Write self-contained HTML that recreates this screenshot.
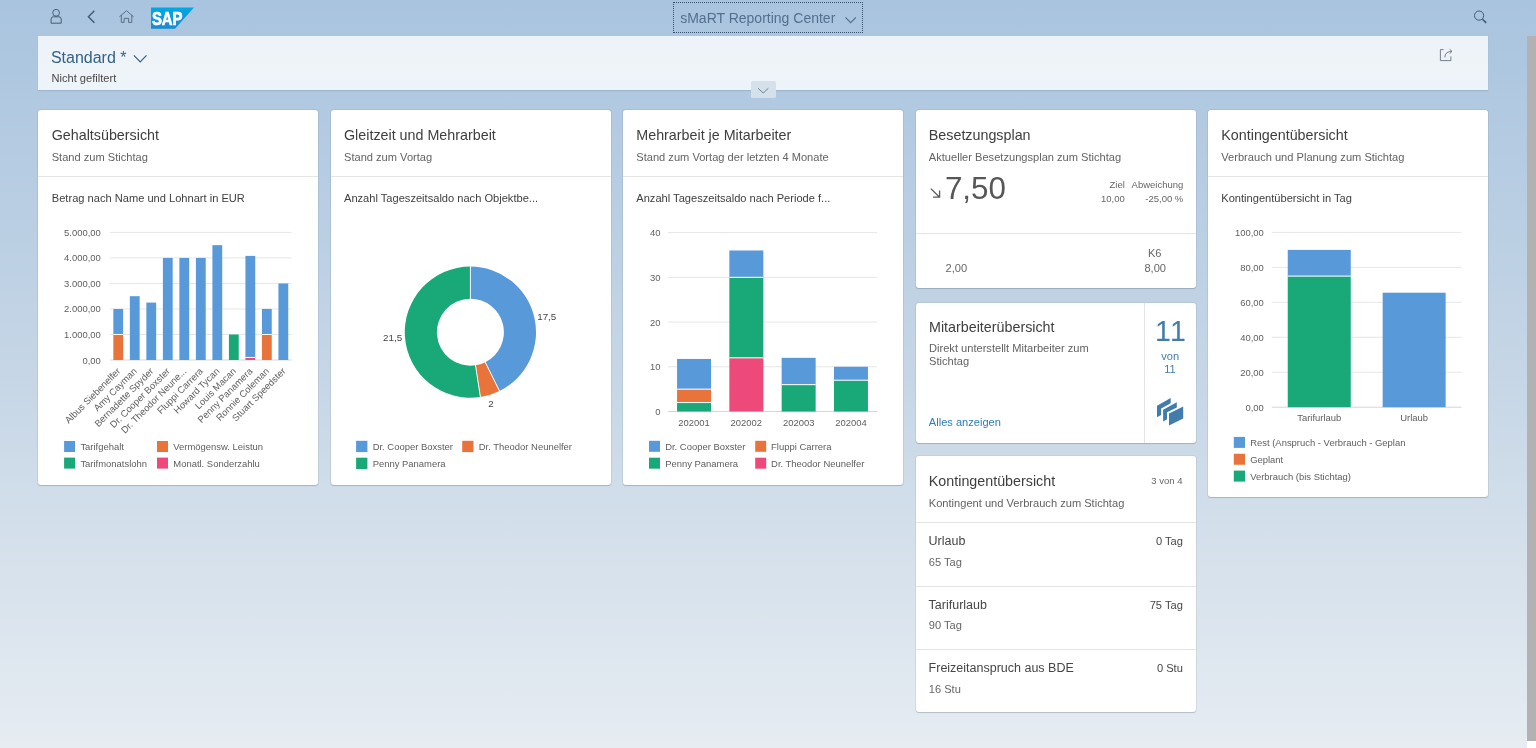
<!DOCTYPE html>
<html><head><meta charset="utf-8"><title>sMaRT Reporting Center</title>
<style>
html,body{margin:0;padding:0;width:1536px;height:748px;overflow:hidden;}
body{position:relative;font-family:"Liberation Sans", sans-serif;background:linear-gradient(180deg,#a9c4df 0%,#c6d6e6 50%,#e6ecf2 100%);}
.t{position:absolute;white-space:nowrap;}
.card{position:absolute;background:#fff;border-radius:3px;box-shadow:0 0 0 1px rgba(40,70,100,0.07),0 1px 1px rgba(0,0,0,0.15);}
.div{position:absolute;height:1px;background:#e5e5e5;}
.vdiv{position:absolute;width:1px;background:#e5e5e5;}
.hdr{position:absolute;left:38px;top:36px;width:1450px;height:54px;background:linear-gradient(180deg,rgba(255,255,255,0.78) 0%,rgba(255,255,255,0.80) 70%,rgba(245,252,255,0.86) 100%);box-shadow:0 1px 1px rgba(60,80,100,0.14);}
.focus{position:absolute;left:673px;top:2px;width:190px;height:31px;box-sizing:border-box;border:1px dotted #34506b;}
.coll{position:absolute;left:750.8px;top:81px;width:25px;height:16.6px;background:#d4e0ea;border-radius:1.5px;}
.sb{position:absolute;left:1526.5px;top:36px;width:9.5px;height:705px;background:#b2b2b2;}
.sbw{position:absolute;left:1526.5px;top:741px;width:9.5px;height:7px;background:#fff;}
svg.ov{position:absolute;left:0;top:0;will-change:transform;}
.txt{position:absolute;left:0;top:0;width:1536px;height:748px;will-change:transform;}
svg text{font-family:"Liberation Sans", sans-serif;}
</style></head><body>
<div class="hdr"></div>
<div class="coll"></div>
<div class="sb"></div><div class="focus"></div><div class="sbw"></div>
<div class="card" style="left:38px;top:110px;width:280px;height:375px"></div><div class="card" style="left:330.5px;top:110px;width:280.0px;height:375px"></div><div class="card" style="left:623px;top:110px;width:280px;height:375px"></div><div class="card" style="left:915.5px;top:110px;width:280.5px;height:178px"></div><div class="card" style="left:915.5px;top:302.7px;width:280.5px;height:140.10000000000002px"></div><div class="card" style="left:915.5px;top:456px;width:280.5px;height:256.20000000000005px"></div><div class="card" style="left:1208px;top:110px;width:280px;height:387px"></div>
<svg class="ov" width="1536" height="748" viewBox="0 0 1536 748"><circle cx="56.1" cy="12.8" r="3.4" fill="none" stroke="#41596f" stroke-width="0.95"/><path d="M51.1,23.2 L51.1,19.1 Q51.1,16.8 53.4,16.8 L58.9,16.8 Q61.2,16.8 61.2,19.1 L61.2,23.2 Z" fill="none" stroke="#41596f" stroke-width="0.95"/><path d="M94.4,10.8 L88.4,16.8 L94.4,22.7" fill="none" stroke="#3f5a73" stroke-width="1.4"/><path d="M119.4,16.8 L126.5,10.7 L133.6,16.8 M121.3,15.2 L121.3,22.4 L124.1,22.4 L124.1,18.4 L128.6,18.4 L128.6,22.4 L131.8,22.4 L131.8,15.2" fill="none" stroke="#5b6f86" stroke-width="1"/><defs><linearGradient id="sapg" x1="0" y1="0" x2="0" y2="1"><stop offset="0" stop-color="#00a8e6"/><stop offset="1" stop-color="#1b8ad0"/></linearGradient></defs><path d="M151,7.4 L194,7.4 L175,28.8 L151,28.8 Z" fill="url(#sapg)"/><text x="151.9" y="24.8" font-size="18.6" font-weight="bold" fill="#fff" stroke="#fff" stroke-width="0.7" textLength="30.6" lengthAdjust="spacingAndGlyphs">SAP</text><path d="M845.5,17.4 L850.7,22.6 L855.9,17.4" fill="none" stroke="#4f6d8a" stroke-width="1.1"/><circle cx="1479.1" cy="15.6" r="4.6" fill="none" stroke="#3f5a73" stroke-width="1"/><path d="M1482.5,19.2 L1486.2,22.9" stroke="#3f5a73" stroke-width="1.6"/><path d="M133.9,55.4 L140.2,61.9 L146.5,55.4" fill="none" stroke="#346187" stroke-width="1.2"/><path d="M1443.6,49.6 L1440.4,49.6 L1440.4,60.6 L1450.9,60.6 L1450.9,56.4" fill="none" stroke="#65737f" stroke-width="0.9"/><path d="M1444.8,57.4 Q1445,51.6 1451.6,51.4" fill="none" stroke="#65737f" stroke-width="0.9"/><path d="M1449.6,49.2 L1452,51.4 L1449.6,53.6" fill="none" stroke="#65737f" stroke-width="0.9"/><path d="M758.1,88.3 L763.2,93 L768.3,88.3" fill="none" stroke="#66798a" stroke-width="0.9"/></svg>
<svg class="ov" width="1536" height="748" viewBox="0 0 1536 748"><line x1="110.00" y1="360.00" x2="291.60" y2="360.00" stroke="#d6d6d6" stroke-width="1"/><text x="100.80" y="363.50" font-size="9.45" fill="#5e5e5e" text-anchor="end" >0,00</text><line x1="110.00" y1="334.48" x2="291.60" y2="334.48" stroke="#e6e6e6" stroke-width="1"/><text x="100.80" y="337.98" font-size="9.45" fill="#5e5e5e" text-anchor="end" >1.000,00</text><line x1="110.00" y1="308.96" x2="291.60" y2="308.96" stroke="#e6e6e6" stroke-width="1"/><text x="100.80" y="312.46" font-size="9.45" fill="#5e5e5e" text-anchor="end" >2.000,00</text><line x1="110.00" y1="283.44" x2="291.60" y2="283.44" stroke="#e6e6e6" stroke-width="1"/><text x="100.80" y="286.94" font-size="9.45" fill="#5e5e5e" text-anchor="end" >3.000,00</text><line x1="110.00" y1="257.92" x2="291.60" y2="257.92" stroke="#e6e6e6" stroke-width="1"/><text x="100.80" y="261.42" font-size="9.45" fill="#5e5e5e" text-anchor="end" >4.000,00</text><line x1="110.00" y1="232.40" x2="291.60" y2="232.40" stroke="#e6e6e6" stroke-width="1"/><text x="100.80" y="235.90" font-size="9.45" fill="#5e5e5e" text-anchor="end" >5.000,00</text><rect x="113.35" y="334.48" width="9.80" height="25.52" fill="#e8743b" /><rect x="113.35" y="308.96" width="9.80" height="25.52" fill="#5899da" /><line x1="113.35" y1="334.48" x2="123.15" y2="334.48" stroke="#fff" stroke-width="1"/><text x="121.05" y="371.80" font-size="9.45" fill="#5e5e5e" text-anchor="end" transform="rotate(-45 121.05 371.8)">Albus Siebenelfer</text><rect x="129.86" y="296.20" width="9.80" height="63.80" fill="#5899da" /><text x="137.56" y="371.80" font-size="9.45" fill="#5e5e5e" text-anchor="end" transform="rotate(-45 137.56 371.8)">Amy Cayman</text><rect x="146.37" y="302.58" width="9.80" height="57.42" fill="#5899da" /><text x="154.07" y="371.80" font-size="9.45" fill="#5e5e5e" text-anchor="end" transform="rotate(-45 154.07 371.8)">Bernadette Spyder</text><rect x="162.88" y="257.92" width="9.80" height="102.08" fill="#5899da" /><text x="170.58" y="371.80" font-size="9.45" fill="#5e5e5e" text-anchor="end" transform="rotate(-45 170.58 371.8)">Dr. Cooper Boxster</text><rect x="179.39" y="257.92" width="9.80" height="102.08" fill="#5899da" /><text x="187.09" y="371.80" font-size="9.45" fill="#5e5e5e" text-anchor="end" transform="rotate(-45 187.09 371.8)">Dr. Theodor Neune...</text><rect x="195.90" y="257.92" width="9.80" height="102.08" fill="#5899da" /><text x="203.60" y="371.80" font-size="9.45" fill="#5e5e5e" text-anchor="end" transform="rotate(-45 203.60 371.8)">Fluppi Carrera</text><rect x="212.41" y="245.16" width="9.80" height="114.84" fill="#5899da" /><text x="220.11" y="371.80" font-size="9.45" fill="#5e5e5e" text-anchor="end" transform="rotate(-45 220.11 371.8)">Howard Tycan</text><rect x="228.92" y="334.48" width="9.80" height="25.52" fill="#19a979" /><text x="236.62" y="371.80" font-size="9.45" fill="#5e5e5e" text-anchor="end" transform="rotate(-45 236.62 371.8)">Louis Macan</text><rect x="245.43" y="357.45" width="9.80" height="2.55" fill="#ed4a7b" /><rect x="245.43" y="255.88" width="9.80" height="101.57" fill="#5899da" /><line x1="245.43" y1="357.45" x2="255.23" y2="357.45" stroke="#fff" stroke-width="1"/><text x="253.13" y="371.80" font-size="9.45" fill="#5e5e5e" text-anchor="end" transform="rotate(-45 253.13 371.8)">Penny Panamera</text><rect x="261.94" y="334.48" width="9.80" height="25.52" fill="#e8743b" /><rect x="261.94" y="308.96" width="9.80" height="25.52" fill="#5899da" /><line x1="261.94" y1="334.48" x2="271.74" y2="334.48" stroke="#fff" stroke-width="1"/><text x="269.64" y="371.80" font-size="9.45" fill="#5e5e5e" text-anchor="end" transform="rotate(-45 269.64 371.8)">Ronnie Coleman</text><rect x="278.45" y="283.44" width="9.80" height="76.56" fill="#5899da" /><text x="286.15" y="371.80" font-size="9.45" fill="#5e5e5e" text-anchor="end" transform="rotate(-45 286.15 371.8)">Stuart Speedster</text><rect x="64.10" y="441.00" width="11.00" height="11.00" fill="#5899da" /><text x="80.40" y="449.90" font-size="9.45" fill="#5e5e5e" text-anchor="start" >Tarifgehalt</text><rect x="157.00" y="441.00" width="11.00" height="11.00" fill="#e8743b" /><text x="173.30" y="449.90" font-size="9.45" fill="#5e5e5e" text-anchor="start" >Vermögensw. Leistun</text><rect x="64.10" y="457.60" width="11.00" height="11.00" fill="#19a979" /><text x="80.40" y="466.50" font-size="9.45" fill="#5e5e5e" text-anchor="start" >Tarifmonatslohn</text><rect x="157.00" y="457.60" width="11.00" height="11.00" fill="#ed4a7b" /><text x="173.30" y="466.50" font-size="9.45" fill="#5e5e5e" text-anchor="start" >Monatl. Sonderzahlu</text><path d="M470.40,266.60 A65.6,65.6 0 0 1 499.51,390.99 L485.26,362.22 A33.5,33.5 0 0 0 470.40,298.70 Z" fill="#5899da"/><path d="M499.51,390.99 A65.6,65.6 0 0 1 480.41,397.03 L475.51,365.31 A33.5,33.5 0 0 0 485.26,362.22 Z" fill="#e8743b"/><path d="M480.41,397.03 A65.6,65.6 0 1 1 470.40,266.60 L470.40,298.70 A33.5,33.5 0 1 0 475.51,365.31 Z" fill="#19a979"/><line x1="470.40" y1="299.70" x2="470.40" y2="265.60" stroke="#fff" stroke-width="1"/><line x1="484.82" y1="361.33" x2="499.95" y2="391.88" stroke="#fff" stroke-width="1"/><line x1="475.36" y1="364.32" x2="480.57" y2="398.02" stroke="#fff" stroke-width="1"/><text x="537.20" y="320.00" font-size="9.8" fill="#444" text-anchor="start" >17,5</text><text x="402.10" y="341.20" font-size="9.8" fill="#444" text-anchor="end" >21,5</text><text x="491.00" y="407.40" font-size="9.8" fill="#444" text-anchor="middle" >2</text><rect x="356.10" y="440.80" width="11.30" height="11.30" fill="#5899da" /><text x="372.70" y="449.85" font-size="9.45" fill="#5e5e5e" text-anchor="start" >Dr. Cooper Boxster</text><rect x="462.20" y="440.80" width="11.30" height="11.30" fill="#e8743b" /><text x="478.80" y="449.85" font-size="9.45" fill="#5e5e5e" text-anchor="start" >Dr. Theodor Neunelfer</text><rect x="356.10" y="457.70" width="11.30" height="11.30" fill="#19a979" /><text x="372.70" y="466.75" font-size="9.45" fill="#5e5e5e" text-anchor="start" >Penny Panamera</text><line x1="667.90" y1="411.50" x2="877.10" y2="411.50" stroke="#d6d6d6" stroke-width="1"/><text x="660.50" y="415.00" font-size="9.45" fill="#5e5e5e" text-anchor="end" >0</text><line x1="667.90" y1="366.77" x2="877.10" y2="366.77" stroke="#e6e6e6" stroke-width="1"/><text x="660.50" y="370.27" font-size="9.45" fill="#5e5e5e" text-anchor="end" >10</text><line x1="667.90" y1="322.05" x2="877.10" y2="322.05" stroke="#e6e6e6" stroke-width="1"/><text x="660.50" y="325.55" font-size="9.45" fill="#5e5e5e" text-anchor="end" >20</text><line x1="667.90" y1="277.32" x2="877.10" y2="277.32" stroke="#e6e6e6" stroke-width="1"/><text x="660.50" y="280.82" font-size="9.45" fill="#5e5e5e" text-anchor="end" >30</text><line x1="667.90" y1="232.60" x2="877.10" y2="232.60" stroke="#e6e6e6" stroke-width="1"/><text x="660.50" y="236.10" font-size="9.45" fill="#5e5e5e" text-anchor="end" >40</text><rect x="677.05" y="402.56" width="34.00" height="8.94" fill="#19a979" /><rect x="677.05" y="389.14" width="34.00" height="13.42" fill="#e8743b" /><line x1="677.05" y1="402.56" x2="711.05" y2="402.56" stroke="#fff" stroke-width="1"/><rect x="677.05" y="358.95" width="34.00" height="30.19" fill="#5899da" /><line x1="677.05" y1="389.14" x2="711.05" y2="389.14" stroke="#fff" stroke-width="1"/><text x="694.05" y="426.00" font-size="9.45" fill="#5e5e5e" text-anchor="middle" >202001</text><rect x="729.35" y="357.83" width="34.00" height="53.67" fill="#ed4a7b" /><rect x="729.35" y="277.32" width="34.00" height="80.50" fill="#19a979" /><line x1="729.35" y1="357.83" x2="763.35" y2="357.83" stroke="#fff" stroke-width="1"/><rect x="729.35" y="250.49" width="34.00" height="26.84" fill="#5899da" /><line x1="729.35" y1="277.32" x2="763.35" y2="277.32" stroke="#fff" stroke-width="1"/><text x="746.35" y="426.00" font-size="9.45" fill="#5e5e5e" text-anchor="middle" >202002</text><rect x="781.65" y="384.67" width="34.00" height="26.83" fill="#19a979" /><rect x="781.65" y="357.83" width="34.00" height="26.84" fill="#5899da" /><line x1="781.65" y1="384.67" x2="815.65" y2="384.67" stroke="#fff" stroke-width="1"/><text x="798.65" y="426.00" font-size="9.45" fill="#5e5e5e" text-anchor="middle" >202003</text><rect x="833.95" y="380.19" width="34.00" height="31.31" fill="#19a979" /><rect x="833.95" y="366.77" width="34.00" height="13.42" fill="#5899da" /><line x1="833.95" y1="380.19" x2="867.95" y2="380.19" stroke="#fff" stroke-width="1"/><text x="850.95" y="426.00" font-size="9.45" fill="#5e5e5e" text-anchor="middle" >202004</text><rect x="649.00" y="440.80" width="11.00" height="11.00" fill="#5899da" /><text x="665.20" y="449.70" font-size="9.45" fill="#5e5e5e" text-anchor="start" >Dr. Cooper Boxster</text><rect x="755.20" y="440.80" width="11.00" height="11.00" fill="#e8743b" /><text x="771.10" y="449.70" font-size="9.45" fill="#5e5e5e" text-anchor="start" >Fluppi Carrera</text><rect x="649.00" y="457.70" width="11.00" height="11.00" fill="#19a979" /><text x="665.20" y="466.60" font-size="9.45" fill="#5e5e5e" text-anchor="start" >Penny Panamera</text><rect x="755.20" y="457.70" width="11.00" height="11.00" fill="#ed4a7b" /><text x="771.10" y="466.60" font-size="9.45" fill="#5e5e5e" text-anchor="start" >Dr. Theodor Neunelfer</text><line x1="1271.80" y1="407.20" x2="1461.60" y2="407.20" stroke="#d6d6d6" stroke-width="1"/><text x="1263.80" y="410.70" font-size="9.45" fill="#5e5e5e" text-anchor="end" >0,00</text><line x1="1271.80" y1="372.24" x2="1461.60" y2="372.24" stroke="#e6e6e6" stroke-width="1"/><text x="1263.80" y="375.74" font-size="9.45" fill="#5e5e5e" text-anchor="end" >20,00</text><line x1="1271.80" y1="337.28" x2="1461.60" y2="337.28" stroke="#e6e6e6" stroke-width="1"/><text x="1263.80" y="340.78" font-size="9.45" fill="#5e5e5e" text-anchor="end" >40,00</text><line x1="1271.80" y1="302.32" x2="1461.60" y2="302.32" stroke="#e6e6e6" stroke-width="1"/><text x="1263.80" y="305.82" font-size="9.45" fill="#5e5e5e" text-anchor="end" >60,00</text><line x1="1271.80" y1="267.36" x2="1461.60" y2="267.36" stroke="#e6e6e6" stroke-width="1"/><text x="1263.80" y="270.86" font-size="9.45" fill="#5e5e5e" text-anchor="end" >80,00</text><line x1="1271.80" y1="232.40" x2="1461.60" y2="232.40" stroke="#e6e6e6" stroke-width="1"/><text x="1263.80" y="235.90" font-size="9.45" fill="#5e5e5e" text-anchor="end" >100,00</text><rect x="1287.75" y="276.10" width="63.00" height="131.10" fill="#19a979" /><rect x="1287.75" y="249.88" width="63.00" height="26.22" fill="#5899da" /><line x1="1287.75" y1="276.10" x2="1350.75" y2="276.10" stroke="#fff" stroke-width="1"/><text x="1319.25" y="421.30" font-size="9.45" fill="#5e5e5e" text-anchor="middle" >Tarifurlaub</text><rect x="1382.65" y="292.71" width="63.00" height="114.49" fill="#5899da" /><text x="1414.15" y="421.30" font-size="9.45" fill="#5e5e5e" text-anchor="middle" >Urlaub</text><rect x="1233.80" y="436.90" width="11.20" height="11.00" fill="#5899da" /><text x="1250.20" y="445.80" font-size="9.45" fill="#5e5e5e" text-anchor="start" >Rest (Anspruch - Verbrauch - Geplan</text><rect x="1233.80" y="453.75" width="11.20" height="11.00" fill="#e8743b" /><text x="1250.20" y="462.65" font-size="9.45" fill="#5e5e5e" text-anchor="start" >Geplant</text><rect x="1233.80" y="470.60" width="11.20" height="11.00" fill="#19a979" /><text x="1250.20" y="479.50" font-size="9.45" fill="#5e5e5e" text-anchor="start" >Verbrauch (bis Stichtag)</text><path d="M930.8,188.6 L939.6,197.2 M939.6,190.6 L939.6,197.2 L933,197.2" stroke="#5a5a5a" stroke-width="1.3" fill="none"/><path d="M1157,405.7 L1170.7,398.09999999999997 L1170.7,409.7 L1157,417.3 Z" fill="#427cac" stroke="#fff" stroke-width="4" paint-order="stroke" stroke-linejoin="miter"/><path d="M1163.1,409.7 L1176.8,402.2 L1176.8,414.0 L1163.1,421.5 Z" fill="#427cac" stroke="#fff" stroke-width="4" paint-order="stroke" stroke-linejoin="miter"/><path d="M1169,413.6 L1183.2,406.6 L1183.2,418.6 L1169,425.6 Z" fill="#427cac" stroke="#fff" stroke-width="4" paint-order="stroke" stroke-linejoin="miter"/></svg>
<div class="txt"><div class="div" style="left:38px;top:176px;width:280px"></div><div class="div" style="left:330.5px;top:176px;width:280px"></div><div class="div" style="left:623px;top:176px;width:280px"></div><div class="div" style="left:1208px;top:176px;width:280px"></div><div class="div" style="left:915.5px;top:233px;width:280.5px"></div><div class="div" style="left:915.5px;top:522px;width:280.5px"></div><div class="div" style="left:915.5px;top:585.5px;width:280.5px"></div><div class="div" style="left:915.5px;top:649px;width:280.5px"></div><div class="vdiv" style="left:1144px;top:302.7px;height:140px"></div><div class="t" style="left:51.70px;top:127.90px;font-size:14.3px;line-height:14.3px;color:#3e3e3e;font-weight:normal;">Gehaltsübersicht</div><div class="t" style="left:344.00px;top:127.90px;font-size:14.3px;line-height:14.3px;color:#3e3e3e;font-weight:normal;">Gleitzeit und Mehrarbeit</div><div class="t" style="left:636.30px;top:127.90px;font-size:14.3px;line-height:14.3px;color:#3e3e3e;font-weight:normal;">Mehrarbeit je Mitarbeiter</div><div class="t" style="left:928.80px;top:128.10px;font-size:14.3px;line-height:14.3px;color:#3e3e3e;font-weight:normal;">Besetzungsplan</div><div class="t" style="left:1221.30px;top:127.90px;font-size:14.3px;line-height:14.3px;color:#3e3e3e;font-weight:normal;">Kontingentübersicht</div><div class="t" style="left:929.00px;top:320.20px;font-size:14.3px;line-height:14.3px;color:#3e3e3e;font-weight:normal;">Mitarbeiterübersicht</div><div class="t" style="left:928.80px;top:473.60px;font-size:14.3px;line-height:14.3px;color:#3e3e3e;font-weight:normal;">Kontingentübersicht</div><div class="t" style="left:51.70px;top:151.60px;font-size:11.1px;line-height:11.1px;color:#636363;font-weight:normal;">Stand zum Stichtag</div><div class="t" style="left:344.00px;top:151.60px;font-size:11.1px;line-height:11.1px;color:#636363;font-weight:normal;">Stand zum Vortag</div><div class="t" style="left:636.30px;top:151.60px;font-size:11.1px;line-height:11.1px;color:#636363;font-weight:normal;">Stand zum Vortag der letzten 4 Monate</div><div class="t" style="left:928.80px;top:151.70px;font-size:11.1px;line-height:11.1px;color:#636363;font-weight:normal;">Aktueller Besetzungsplan zum Stichtag</div><div class="t" style="left:1221.30px;top:151.60px;font-size:11.1px;line-height:11.1px;color:#636363;font-weight:normal;">Verbrauch und Planung zum Stichtag</div><div class="t" style="left:929.00px;top:343.20px;font-size:11.1px;line-height:11.1px;color:#636363;font-weight:normal;">Direkt unterstellt Mitarbeiter zum</div><div class="t" style="left:929.00px;top:356.10px;font-size:11.1px;line-height:11.1px;color:#636363;font-weight:normal;">Stichtag</div><div class="t" style="left:928.80px;top:498.00px;font-size:11.1px;line-height:11.1px;color:#636363;font-weight:normal;">Kontingent und Verbrauch zum Stichtag</div><div class="t" style="left:51.80px;top:192.90px;font-size:11.1px;line-height:11.1px;color:#404040;font-weight:normal;">Betrag nach Name und Lohnart in EUR</div><div class="t" style="left:344.00px;top:192.90px;font-size:11.1px;line-height:11.1px;color:#404040;font-weight:normal;">Anzahl Tageszeitsaldo nach Objektbe...</div><div class="t" style="left:636.30px;top:192.90px;font-size:11.1px;line-height:11.1px;color:#404040;font-weight:normal;">Anzahl Tageszeitsaldo nach Periode f...</div><div class="t" style="left:1221.30px;top:192.90px;font-size:11.1px;line-height:11.1px;color:#404040;font-weight:normal;">Kontingentübersicht in Tag</div><div class="t" style="left:944.90px;top:172.72px;font-size:31.4px;line-height:31.4px;color:#575757;font-weight:normal;">7,50</div><div class="t" style="right:411.20px;top:179.76px;font-size:9.5px;line-height:9.5px;color:#666;font-weight:normal;">Ziel</div><div class="t" style="right:352.70px;top:179.76px;font-size:9.5px;line-height:9.5px;color:#666;font-weight:normal;">Abweichung</div><div class="t" style="right:411.20px;top:194.36px;font-size:9.5px;line-height:9.5px;color:#666;font-weight:normal;">10,00</div><div class="t" style="right:352.70px;top:194.36px;font-size:9.5px;line-height:9.5px;color:#666;font-weight:normal;">-25,00 %</div><div class="t" style="left:945.60px;top:262.90px;font-size:11.1px;line-height:11.1px;color:#666;font-weight:normal;">2,00</div><div class="t" style="right:374.50px;top:248.40px;font-size:11.1px;line-height:11.1px;color:#666;font-weight:normal;">K6</div><div class="t" style="right:370.00px;top:262.90px;font-size:11.1px;line-height:11.1px;color:#666;font-weight:normal;">8,00</div><div class="t" style="left:871.10px;width:600px;text-align:center;top:316.79px;font-size:28.6px;line-height:28.6px;color:#427cac;font-weight:normal;letter-spacing:1.3px;">11</div><div class="t" style="left:870.20px;width:600px;text-align:center;top:351.10px;font-size:11.1px;line-height:11.1px;color:#427cac;font-weight:normal;">von</div><div class="t" style="left:870.00px;width:600px;text-align:center;top:363.50px;font-size:11.1px;line-height:11.1px;color:#427cac;font-weight:normal;">11</div><div class="t" style="left:928.80px;top:417.00px;font-size:11.1px;line-height:11.1px;color:#2d7fb3;font-weight:normal;">Alles anzeigen</div><div class="t" style="right:353.50px;top:475.76px;font-size:9.5px;line-height:9.5px;color:#666;font-weight:normal;">3 von 4</div><div class="t" style="left:928.60px;top:535.22px;font-size:12.5px;line-height:12.5px;color:#464646;font-weight:normal;">Urlaub</div><div class="t" style="right:353.20px;top:536.40px;font-size:11.1px;line-height:11.1px;color:#464646;font-weight:normal;">0 Tag</div><div class="t" style="left:928.80px;top:556.70px;font-size:11.1px;line-height:11.1px;color:#666;font-weight:normal;">65 Tag</div><div class="t" style="left:928.60px;top:598.72px;font-size:12.5px;line-height:12.5px;color:#464646;font-weight:normal;">Tarifurlaub</div><div class="t" style="right:353.20px;top:599.90px;font-size:11.1px;line-height:11.1px;color:#464646;font-weight:normal;">75 Tag</div><div class="t" style="left:928.80px;top:620.20px;font-size:11.1px;line-height:11.1px;color:#666;font-weight:normal;">90 Tag</div><div class="t" style="left:928.60px;top:662.22px;font-size:12.5px;line-height:12.5px;color:#464646;font-weight:normal;">Freizeitanspruch aus BDE</div><div class="t" style="right:353.20px;top:663.40px;font-size:11.1px;line-height:11.1px;color:#464646;font-weight:normal;">0 Stu</div><div class="t" style="left:928.80px;top:683.70px;font-size:11.1px;line-height:11.1px;color:#666;font-weight:normal;">16 Stu</div><div class="t" style="left:680.20px;top:10.75px;font-size:14.0px;line-height:14.0px;color:#526f8c;font-weight:normal;">sMaRT Reporting Center</div><div class="t" style="left:50.90px;top:50.06px;font-size:16.0px;line-height:16.0px;color:#346187;font-weight:normal;">Standard *</div><div class="t" style="left:51.50px;top:73.10px;font-size:11.1px;line-height:11.1px;color:#474747;font-weight:normal;">Nicht gefiltert</div></div>
</body></html>
